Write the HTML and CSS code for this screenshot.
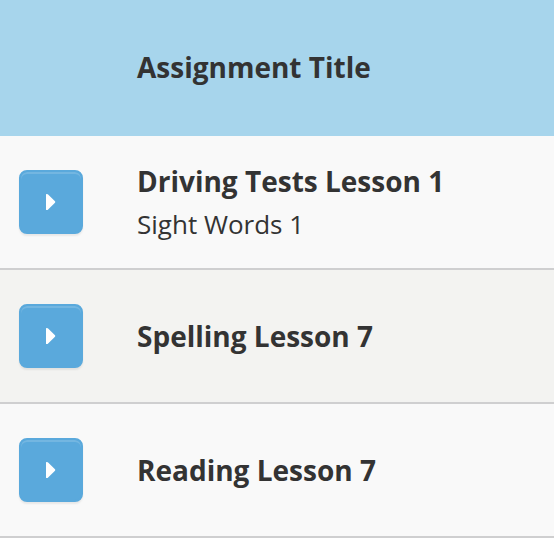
FILE: index.html
```
<!DOCTYPE html>
<html lang="en">
<head>
<meta charset="utf-8">
<title>Assignments</title>
<link rel="stylesheet" href="styles.css">
</head>
<body>
<main class="assignments">
  <header class="row head"><h1 class="title">Assignment Title</h1></header>
  <section class="row">
    <button class="play" aria-label="Open"><svg viewBox="0 0 10 16"><path d="M0 .5Q0 0 .6 0H1Q1.6 0 2.1 .5L9 7.3Q9.6 8 9 8.7L2.1 15.5Q1.6 16 1 16H.6Q0 16 0 15.5Z"/></svg></button>
    <div class="text detailed"><h2 class="title">Driving Tests Lesson 1</h2><p class="sub">Sight Words 1</p></div>
  </section>
  <section class="row alt">
    <button class="play" aria-label="Open"><svg viewBox="0 0 10 16"><path d="M0 .5Q0 0 .6 0H1Q1.6 0 2.1 .5L9 7.3Q9.6 8 9 8.7L2.1 15.5Q1.6 16 1 16H.6Q0 16 0 15.5Z"/></svg></button>
    <div class="text"><h2 class="title">Spelling Lesson 7</h2></div>
  </section>
  <section class="row">
    <button class="play" aria-label="Open"><svg viewBox="0 0 10 16"><path d="M0 .5Q0 0 .6 0H1Q1.6 0 2.1 .5L9 7.3Q9.6 8 9 8.7L2.1 15.5Q1.6 16 1 16H.6Q0 16 0 15.5Z"/></svg></button>
    <div class="text"><h2 class="title">Reading Lesson 7</h2></div>
  </section>
</main>
</body>
</html>
```
FILE: styles.css
```
* { box-sizing: border-box; }
body { margin: 0; background: #f9f9f9; color: #333; font-family: "Open Sans", sans-serif; overflow: hidden; }
.row { display: grid; grid-template-columns: 64px 1fr; column-gap: 54px; align-items: center; height: 134px; padding-left: 19px; background: #f9f9f9; border-bottom: 2px solid #cfcfd0; }
.head { height: 136px; padding-bottom: 2px; background: #a7d5ec; border: 0; }
.head .title { grid-column: 2; }
.alt { background: #f3f3f1; }
.detailed { padding-top: 2px; }
.title { margin: 0; font-size: 28px; line-height: 43px; font-weight: 700; white-space: nowrap; }
.sub { margin: 0; font-size: 26px; line-height: 43px; }
.play { display: flex; align-items: center; justify-content: center; width: 64px; height: 64px; padding: 0; border: 2px solid #5aa9dc; border-radius: 8px; background: #5aa9dc; box-shadow: inset 0 2px 0 #73b6e1, 0 2px 2px #00000012; }
.play svg { width: 10px; height: 16px; fill: #fff; }
```
